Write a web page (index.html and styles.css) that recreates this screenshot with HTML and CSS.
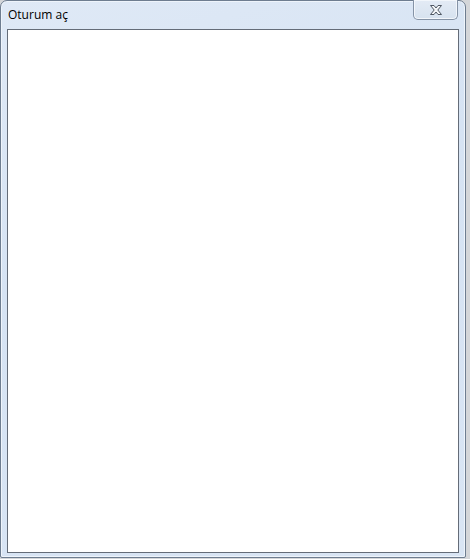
FILE: index.html
```html
<!DOCTYPE html>
<html>
<head>
<meta charset="utf-8">
<link rel="stylesheet" href="styles.css">
</head>
<body>
<div class="window">
  <div class="titlebar">
    <span class="title">Oturum aç</span>
    <div class="close">
      <svg width="14" height="10" viewBox="0 0 14 10">
        <path d="M1.5 0.5 H5 L7 3 L9 0.5 H12.5 L8.8 5 L12.5 9.5 H9 L7 7 L5 9.5 H1.5 L5.2 5 Z" fill="#f4f6f8" stroke="#4f5763" stroke-width="1" stroke-linejoin="round"/>
      </svg>
    </div>
  </div>
  <div class="content"></div>
</div>
</body>
</html>
```
FILE: styles.css
```css
html, body {
  margin: 0;
  padding: 0;
}
body {
  width: 470px;
  height: 559px;
  background: #d4d6d9;
  font-family: "Open Sans", "Noto Sans", "DejaVu Sans", sans-serif;
  overflow: hidden;
}
.window {
  box-sizing: border-box;
  width: 466px;
  height: 558px;
  border: 1px solid #6e7d90;
  border-radius: 7px 7px 2px 2px;
  background: linear-gradient(160deg, #dfe9f6 0%, #d6e3f3 40%, #d9e5f4 100%);
  box-shadow: inset 0 0 0 1px #eef4fb;
  padding: 0 6px 4px 6px;
  display: flex;
  flex-direction: column;
}
.titlebar {
  height: 28px;
  display: flex;
  align-items: flex-start;
  position: relative;
}
.title {
  font-size: 12px;
  color: #000;
  margin-top: 6px;
  margin-left: 1px;
  line-height: 16px;
}
.close {
  position: absolute;
  top: -1px;
  right: 1px;
  width: 45px;
  height: 20px;
  box-sizing: border-box;
  border: 1px solid #8593a6;
  border-top: none;
  border-radius: 0 0 5px 5px;
  background: linear-gradient(#e3ebf5, #d7e2ef);
  box-shadow: inset 0 0 0 1px #f2f6fb;
  display: flex;
  align-items: center;
  justify-content: center;
}
.close svg {
  display: block;
  margin-top: 1px;
}
.content {
  flex: 1;
  background: #fff;
  border: 1px solid #646c78;
}
```
